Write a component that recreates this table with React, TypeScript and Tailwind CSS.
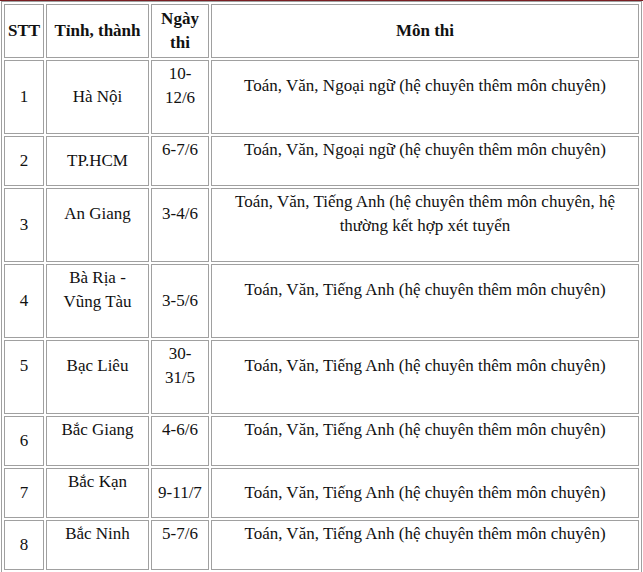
import React from "react";

type Cell = {
  text: React.ReactNode;
  // cells with a blank line's worth of space under the text
  top?: boolean;
};

type Row = {
  h: string;
  cells: Cell[];
};

const rows: Row[] = [
  {
    h: "h-[74px]",
    cells: [
      { text: "1" },
      { text: "Hà Nội" },
      { text: <>10-<br />12/6</>, top: true },
      { text: "Toán, Văn, Ngoại ngữ (hệ chuyên thêm môn chuyên)", top: true },
    ],
  },
  {
    h: "h-[50px]",
    cells: [
      { text: "2" },
      { text: "TP.HCM" },
      { text: "6-7/6", top: true },
      { text: "Toán, Văn, Ngoại ngữ (hệ chuyên thêm môn chuyên)", top: true },
    ],
  },
  {
    h: "h-[74px]",
    cells: [
      { text: "3" },
      { text: "An Giang", top: true },
      { text: "3-4/6", top: true },
      {
        text: <>Toán, Văn, Tiếng Anh (hệ chuyên thêm môn chuyên, hệ<br />thường kết hợp xét tuyển</>,
        top: true,
      },
    ],
  },
  {
    h: "h-[74px]",
    cells: [
      { text: "4" },
      { text: <>Bà Rịa -<br />Vũng Tàu</>, top: true },
      { text: "3-5/6" },
      { text: "Toán, Văn, Tiếng Anh (hệ chuyên thêm môn chuyên)", top: true },
    ],
  },
  {
    h: "h-[74px]",
    cells: [
      { text: "5", top: true },
      { text: "Bạc Liêu", top: true },
      { text: <>30-<br />31/5</>, top: true },
      { text: "Toán, Văn, Tiếng Anh (hệ chuyên thêm môn chuyên)", top: true },
    ],
  },
  {
    h: "h-[50px]",
    cells: [
      { text: "6" },
      { text: "Bắc Giang", top: true },
      { text: "4-6/6", top: true },
      { text: "Toán, Văn, Tiếng Anh (hệ chuyên thêm môn chuyên)", top: true },
    ],
  },
  {
    h: "h-[50px]",
    cells: [
      { text: "7" },
      { text: "Bắc Kạn", top: true },
      { text: "9-11/7" },
      { text: "Toán, Văn, Tiếng Anh (hệ chuyên thêm môn chuyên)" },
    ],
  },
  {
    h: "h-[50px]",
    cells: [
      { text: "8" },
      { text: "Bắc Ninh", top: true },
      { text: "5-7/6", top: true },
      { text: "Toán, Văn, Tiếng Anh (hệ chuyên thêm môn chuyên)", top: true },
    ],
  },
];

const widths = ["w-[40px]", "w-[103px]", "w-[58px]", "w-[428px]"];

export default function App() {
  return (
    <div className="w-[643px] h-[572px] overflow-hidden bg-white text-[#111] font-['Liberation_Serif','Times_New_Roman',serif] text-[17px] leading-[24px]">
      <div className="h-px bg-[#7a1f24]" />
      <table className="ml-px w-[641px] table-fixed border-separate border-spacing-[2px] border border-[#a0a0a0]">
        <thead>
          <tr className="h-[54px]">
            <th className={`${widths[0]} border border-[#a0a0a0] p-px align-middle font-bold`}>STT</th>
            <th className={`${widths[1]} border border-[#a0a0a0] p-px align-middle font-bold`}>Tỉnh, thành</th>
            <th className={`${widths[2]} border border-[#a0a0a0] p-px align-middle font-bold`}>
              Ngày<br />thi
            </th>
            <th className={`${widths[3]} border border-[#a0a0a0] p-px align-middle font-bold`}>Môn thi</th>
          </tr>
        </thead>
        <tbody>
          {rows.map((row, i) => (
            <tr key={i} className={row.h}>
              {row.cells.map((cell, j) => (
                <td
                  key={j}
                  className={`${widths[j]} border border-[#a0a0a0] text-center align-middle ${
                    cell.top ? "px-px pt-px pb-[23px]" : "p-px"
                  }`}
                >
                  {cell.text}
                </td>
              ))}
            </tr>
          ))}
        </tbody>
      </table>
    </div>
  );
}
